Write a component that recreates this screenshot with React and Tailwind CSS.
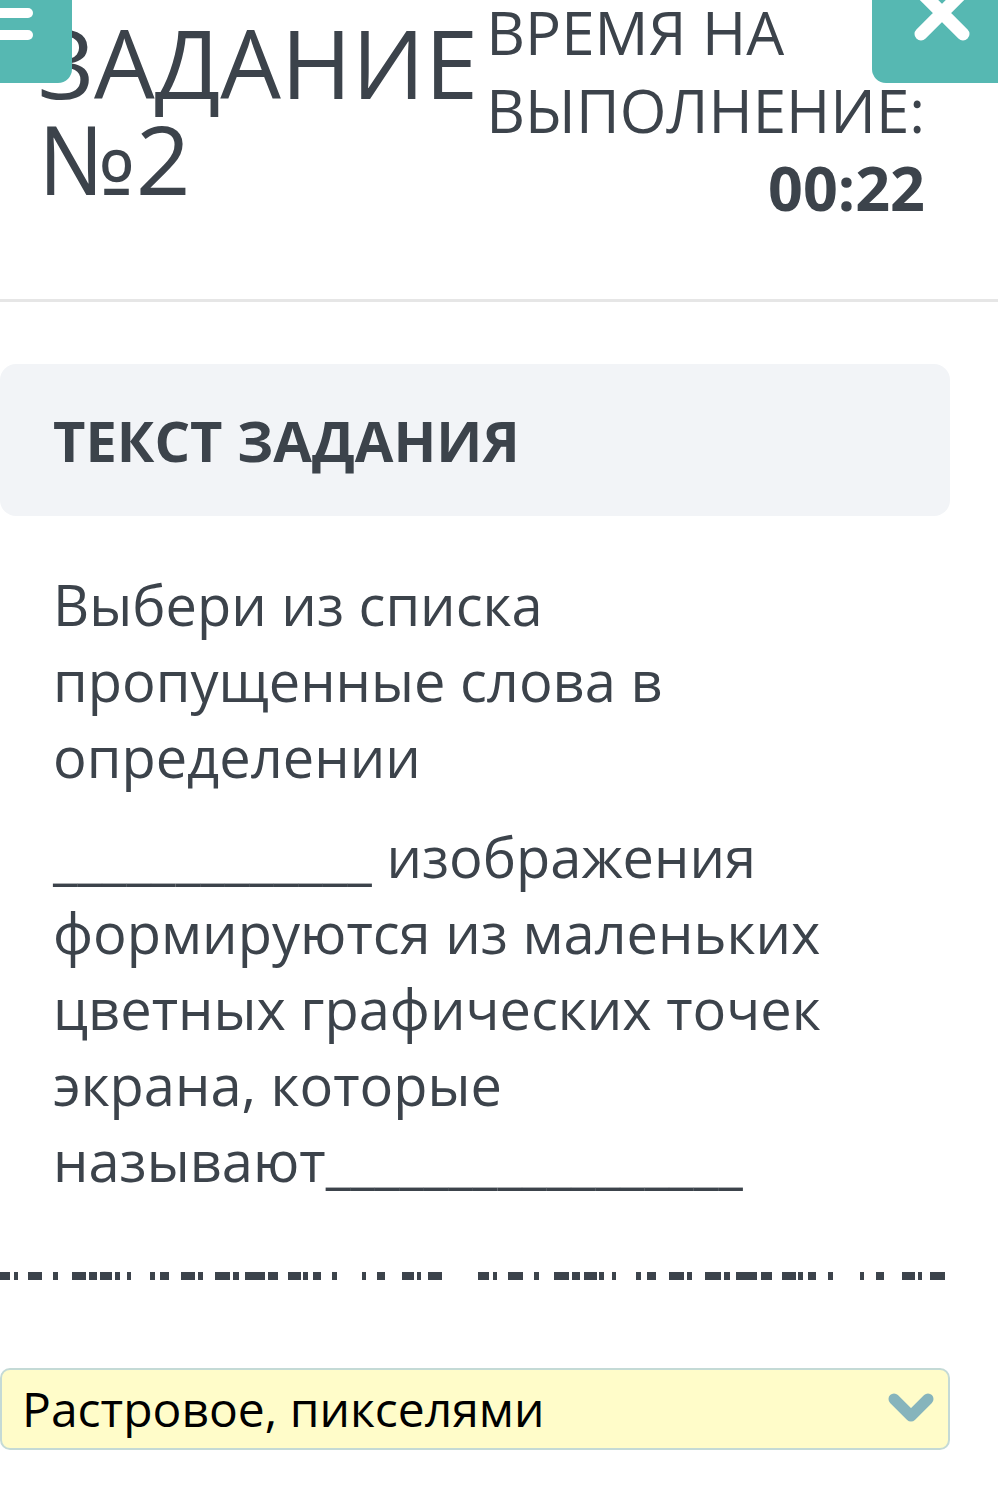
import React from "react";

// dash runs of the torn separator (x, width), one half; the second half repeats a bit wider
const DASHES = [
  [0, 10], [14, 4], [28, 14], [53, 5], [72, 14], [89, 8], [100, 12], [115, 5],
  [127, 4], [150, 5], [160, 9], [181, 14], [198, 5], [215, 15], [233, 6],
  [245, 20], [268, 10], [288, 13], [303, 5], [313, 8], [332, 5], [362, 4],
  [377, 8], [402, 12], [417, 4], [428, 14],
];

function Separator() {
  const runs = [
    ...DASHES,
    ...DASHES.map(([x, w]) => [478 + Math.round(x * 1.055), Math.round(w * 1.055)]),
  ];
  return (
    <svg width="998" height="8" viewBox="0 0 998 8" className="block">
      {runs.map(([x, w], i) => (
        <rect key={i} x={x} y="0" width={w} height="8" fill="#3c434b" />
      ))}
    </svg>
  );
}

export default function App() {
  return (
    <div className="relative min-h-screen overflow-hidden bg-white font-['Open_Sans',sans-serif] text-[#3c434b]">
      {/* Menu button, scrolled half off the screen */}
      <button className="absolute -left-[40px] -top-[20px] flex h-[103px] w-[112px] flex-col gap-[12px] rounded-br-[14px] bg-[#56b8b2] pl-[40px] pt-[6px]">
        <span className="h-[10px] w-[33px] rounded-r-full bg-white" />
        <span className="h-[10px] w-[33px] rounded-r-full bg-white" />
        <span className="h-[10px] w-[33px] rounded-r-full bg-white" />
      </button>

      {/* Close button */}
      <button className="absolute -top-[20px] left-[872px] flex h-[103px] w-[160px] items-start rounded-bl-[14px] bg-[#56b8b2] pl-[35px]">
        <svg width="70" height="70" viewBox="0 0 70 70" className="-mt-[2px]">
          <path d="M14 14 L56 56 M56 14 L14 56" stroke="#fff" strokeWidth="13" strokeLinecap="round" />
        </svg>
      </button>

      {/* Header */}
      <header className="flex items-start justify-between border-b-[3px] border-[#e6e6e6] pb-[72px] pl-[38px] pr-[73px] pt-[14px]">
        <h1 className="shrink-0 text-[96px] font-normal leading-[96px]">
          ЗАДАНИЕ
          <br />
          №2
        </h1>
        <div className="-mt-[21px] shrink-0">
          <div className="text-[60px] leading-[78px]">
            ВРЕМЯ НА
            <br />
            ВЫПОЛНЕНИЕ:
          </div>
          <div className="text-right text-[61px] font-bold leading-[78px]">00:22</div>
        </div>
      </header>

      {/* Task text */}
      <div className="mr-[48px] mt-[62px] flex h-[152px] items-center rounded-[16px] bg-[#f2f4f7] pl-[53px]">
        <h2 className="text-[56px] font-bold leading-none">ТЕКСТ ЗАДАНИЯ</h2>
      </div>

      <div className="px-[53px] pt-[50px] text-[56px] leading-[76px]">
        <p>Выбери из списка пропущенные слова в определении</p>
        <p className="mt-[24px]">
          _____________ изображения формируются из маленьких цветных графических точек экрана, которые
          называют_________________
        </p>
      </div>

      <div className="mt-[74px]">
        <Separator />
      </div>

      {/* Answer select */}
      <div className="mr-[48px] mt-[88px] flex h-[82px] items-center justify-between rounded-[10px] border-2 border-[#c4dad6] bg-[#fffcc9] pl-[20px] pr-[14px]">
        <span className="text-[48px] leading-none text-black">Растровое, пикселями</span>
        <svg width="46" height="34" viewBox="0 0 46 34">
          <path d="M6 7 L23 24 L40 7" fill="none" stroke="#86b4bc" strokeWidth="11" strokeLinejoin="round" strokeLinecap="round" />
        </svg>
      </div>
    </div>
  );
}
